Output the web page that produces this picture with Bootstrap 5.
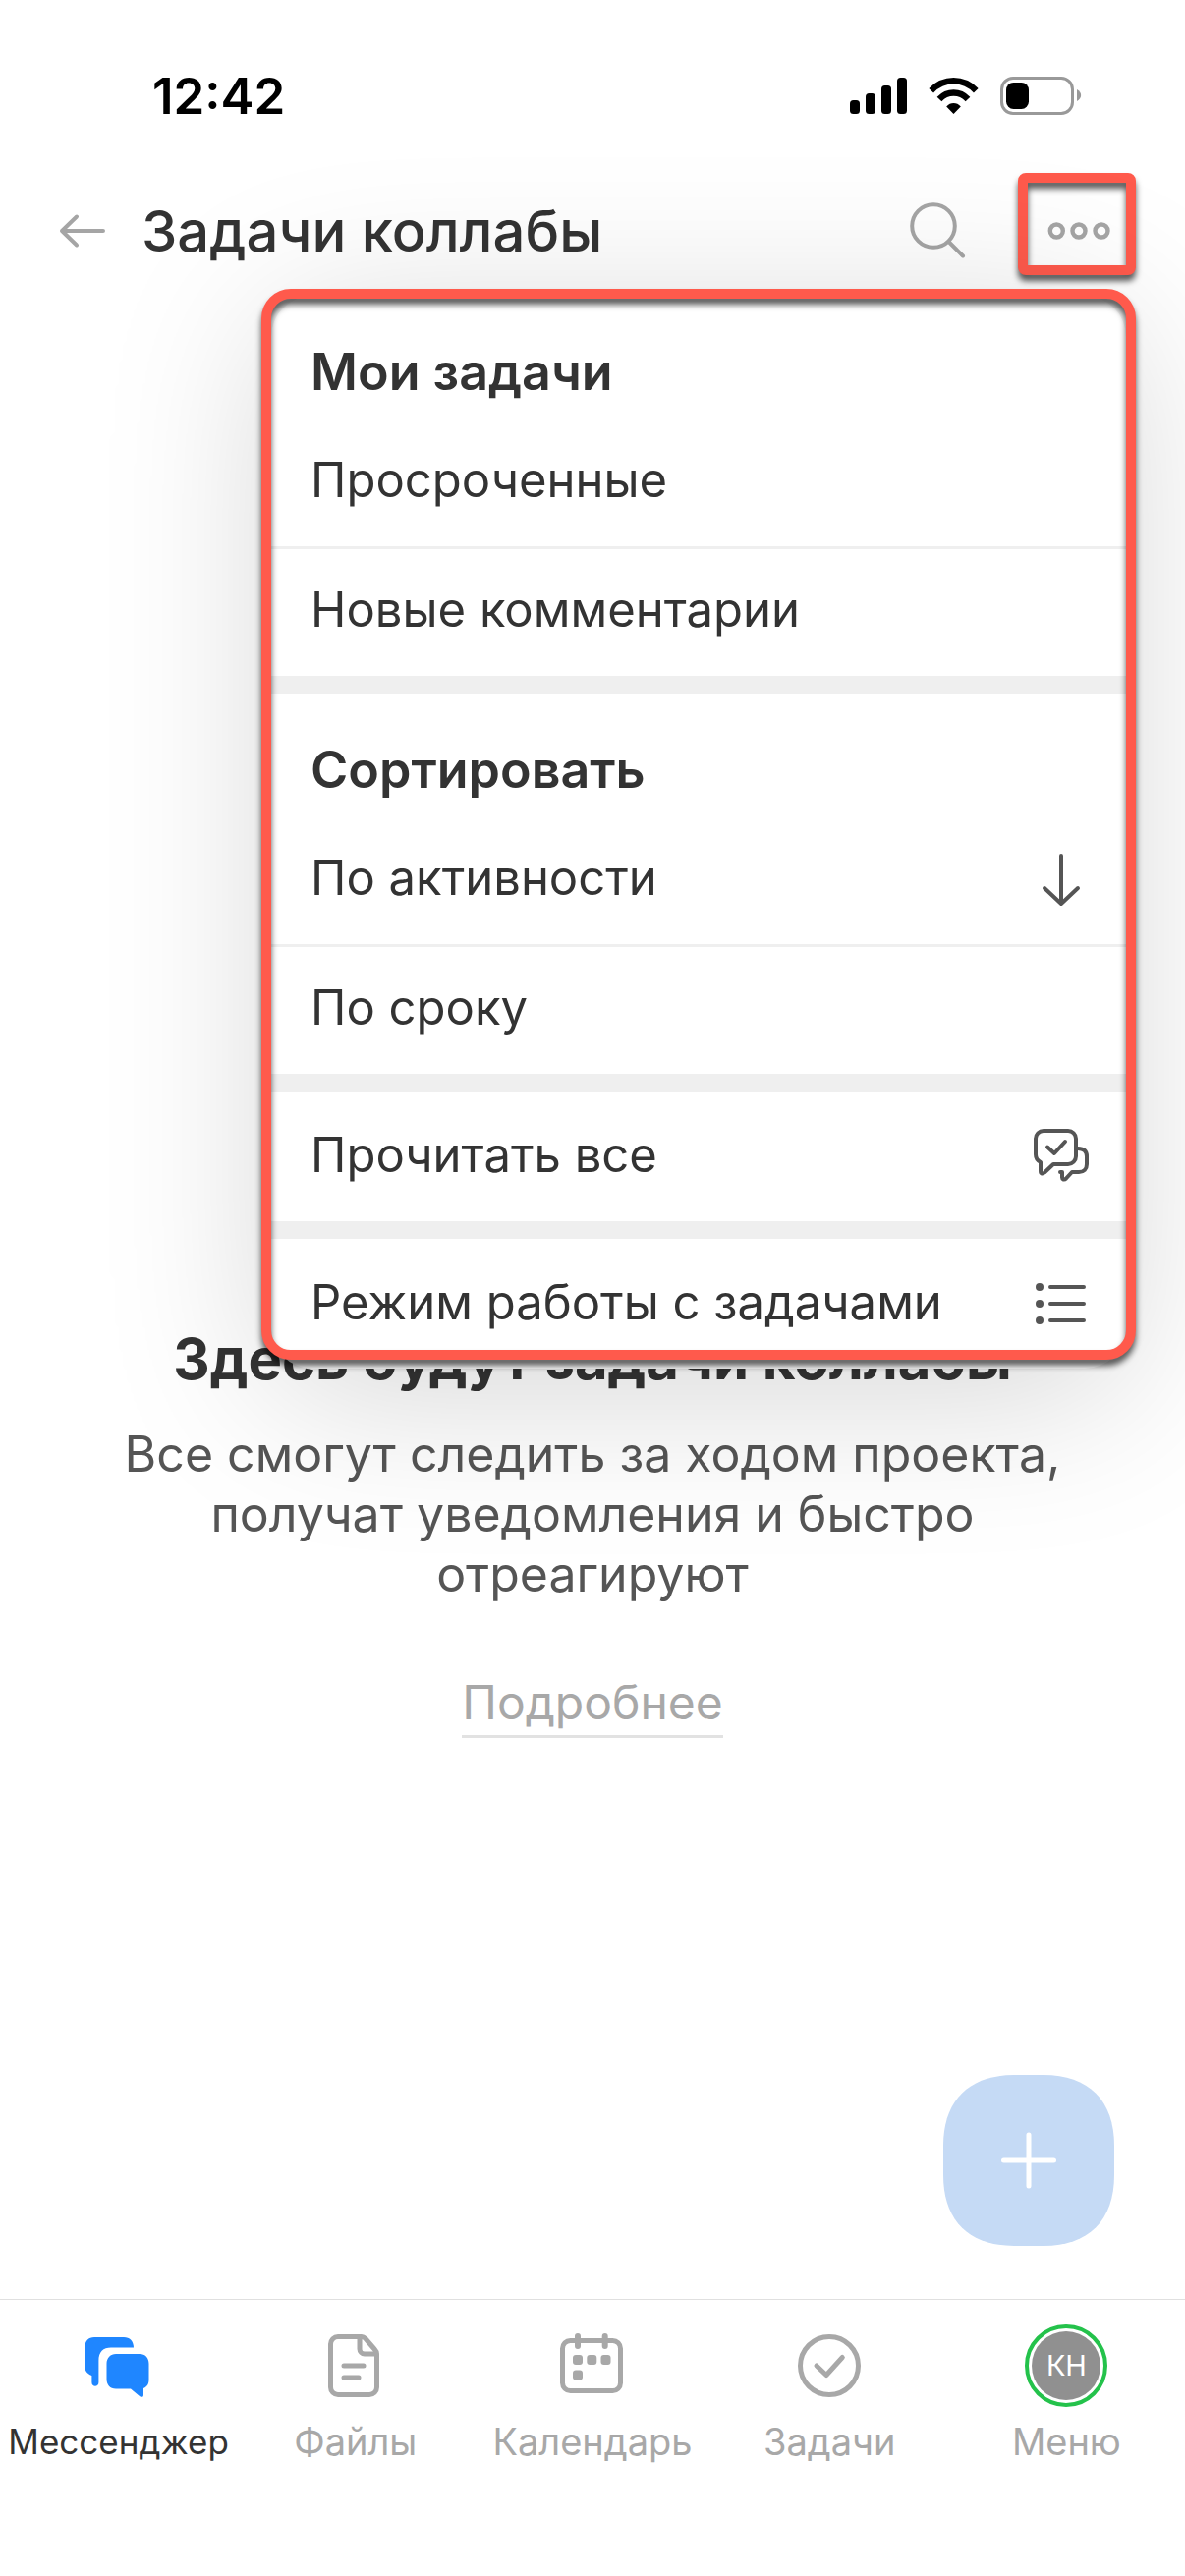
<!DOCTYPE html>
<html lang="ru">
<head>
<meta charset="utf-8">
<meta name="viewport" content="width=device-width, initial-scale=1">
<title>Задачи коллабы</title>
<link href="https://cdn.jsdelivr.net/npm/bootstrap@5.3.0/dist/css/bootstrap.min.css" rel="stylesheet">
<style>
  body { font-family: Inter, "Liberation Sans", sans-serif; color: #333; background: #fff; }
  svg { display: block; fill: none; stroke-linecap: round; stroke-linejoin: round; }
  .status-bar { padding: 78px 105px 53px 155px; }
  .clock { font-size: 51px; line-height: 39px; font-weight: 600; color: #000; }
  .top-bar { height: 130px; padding: 0 50px 0 54px; color: #a5a5a5; }
  .top-bar .btn, .fab { border: 0; padding: 0; color: inherit; }
  .page-title { font-size: 58px; line-height: 64px; font-weight: 500; color: #333; margin: 0 0 0 30px; }
  .more-btn { width: 120px; height: 104px; margin: 6px 0 20px 42px; }
  .callout::after { content: ""; position: absolute; inset: 0; border: 10px solid #ff5a4c; border-radius: 8px; filter: drop-shadow(0 6px 3px rgba(0,0,0,.65)); pointer-events: none; }
  .popup { top: 131px; right: 60px; width: 870px; z-index: 5; border-radius: 42px; background: #fff; box-shadow: 0 24px 170px rgba(0,0,0,.17); color: #333; }
  .popup.callout::after { inset: -7px -10px 9px; border-radius: 30px; }
  .popup-title { font-size: 52px; line-height: 64px; font-weight: 600; height: 123px; padding: 46px 40px 0; margin: 0; }
  .popup-row { display: flex; align-items: center; justify-content: space-between; width: 100%; height: 132px; padding: 32px 36px 38px 40px; border: 0; border-top: 3px solid transparent; background: none; color: inherit; text-align: left; font-size: 49px; line-height: 60px; }
  .popup-row.split { border-top-color: #efefef; }
  .popup-row svg { stroke: #555; stroke-width: 4; }
  .popup-gap { height: 18px; background: #efefef; }
  .empty { padding: 1048px 100px 0; }
  .empty h2 { font-size: 58px; line-height: 70px; font-weight: 700; margin: 0 0 32px; }
  .empty p { font-size: 50px; line-height: 61px; color: #555; margin: 0 0 71px; }
  .empty a { font-size: 48px; line-height: 58px; color: #a8a8a8; border-bottom: 3px solid #e2e2e2; padding-bottom: 4px; text-decoration: none; }
  .fab { right: 72px; bottom: 54px; width: 174px; height: 174px; }
  .tab-bar { border-top: 1px solid #e0e0e0; padding: 25px 0 114px; }
  .tab-bar a { color: #a8a8a8; font-size: 38px; line-height: 46px; text-decoration: none; gap: 12px; flex: 1 1 0; min-width: 0; }
  .tab-bar a.active { color: #333; font-size: 35px; }
  .tab-icon { height: 84px; }
  .tab-icon svg { stroke: #a8a8a8; stroke-width: 5; }
  .avatar { width: 84px; height: 84px; border: 4px solid #24c24b; padding: 3px; }
  .avatar span { background: #909090; color: #fff; font-size: 29px; line-height: 70px; }
</style>
</head>
<body class="d-flex flex-column min-vh-100 overflow-x-hidden">
  <div class="status-bar d-flex justify-content-between align-items-center">
    <span class="clock">12:42</span>
    <svg width="236" height="39" viewBox="865 78 236 39" aria-hidden="true">
      <g fill="#000"><rect x="865" y="102" width="10" height="14" rx="3.5"/><rect x="881" y="95" width="10" height="21" rx="3.5"/><rect x="897" y="87" width="10" height="29" rx="3.5"/><rect x="913" y="79" width="10" height="37" rx="3.5"/>
      <path d="M963.200 108.500c4-4.600 10.600-4.600 14.600 0l-7.300 7.500z"/></g>
      <g stroke="#000" stroke-width="6.500" stroke-linecap="butt"><path d="M947.700 92.200c12.800-13.200 32.800-13.200 45.600 0"/><path d="M956 101c8.200-8.600 20.800-8.600 29 0"/></g>
      <rect x="1019.500" y="79.500" width="72" height="36" rx="11.500" stroke="#999" stroke-width="3"/>
      <rect x="1024" y="84" width="23" height="27" rx="7.500" fill="#000"/>
      <path d="M1096 91c5.500 3 5.500 9 0 12z" fill="#999"/>
    </svg>
  </div>

  <header class="top-bar position-relative d-flex align-items-center">
    <button class="btn" type="button" aria-label="Назад">
      <svg width="60" height="60" viewBox="0 0 60 60" stroke="#a5a5a5" stroke-width="4"><path d="M51 30H9M24 15.500L9 30l15 14.500"/></svg>
    </button>
    <h1 class="page-title">Задачи коллабы</h1>
    <button class="btn ms-auto" type="button" aria-label="Поиск">
      <svg width="70" height="70" viewBox="0 0 70 70" stroke="#a5a5a5" stroke-width="4"><circle cx="26" cy="30" r="21.800"/><path d="M41.500 46L56 60.500"/></svg>
    </button>
    <button class="btn more-btn callout position-relative" type="button" aria-label="Ещё" aria-expanded="true">
      <svg width="120" height="104" viewBox="0 0 120 104" stroke="#a5a5a5" stroke-width="4.400"><circle cx="39.300" cy="59" r="6.500"/><circle cx="62" cy="59" r="6.500"/><circle cx="85" cy="59" r="6.500"/></svg>
    </button>

    <div class="popup callout position-absolute">
      <h2 class="popup-title">Мои задачи</h2>
      <button class="popup-row" type="button"><span>Просроченные</span></button>
      <button class="popup-row split" type="button"><span>Новые комментарии</span></button>
      <div class="popup-gap"></div>
      <h2 class="popup-title">Сортировать</h2>
      <button class="popup-row" type="button"><span>По активности</span>
        <svg width="60" height="60" viewBox="0 0 60 60"><path d="M30 7v49M13 40L30 56l17-16"/></svg>
      </button>
      <button class="popup-row split" type="button"><span>По сроку</span></button>
      <div class="popup-gap"></div>
      <button class="popup-row" type="button"><span>Прочитать все</span>
        <svg width="60" height="60" viewBox="0 0 60 60"><path d="M22 39H37a8 8 0 0 0 8-8V13a8 8 0 0 0-8-8H12a8 8 0 0 0-8 8V29c0 4 1 6 5 8v9c0 3 2 3 4 1.500zM16 21.500l7 6.500 11-12M47 23c6 0 9 3 9 8v8c0 5-3 8-8 8h-7l-6 6.500c-2 2-4 1-4-1V47h-2"/></svg>
      </button>
      <div class="popup-gap"></div>
      <button class="popup-row" type="button"><span class="text-nowrap">Режим работы с задачами</span>
        <svg width="60" height="60" viewBox="0 0 60 60"><path d="M19 14h34M19 31h34M19 48h34"/><g fill="#555" stroke="none"><circle cx="8" cy="14" r="4"/><circle cx="8" cy="31" r="4"/><circle cx="8" cy="48" r="4"/></g></svg>
      </button>
    </div>
  </header>

  <main class="position-relative flex-grow-1">
    <section class="empty text-center">
      <h2>Здесь будут задачи коллабы</h2>
      <p>Все смогут следить за ходом проекта, получат уведомления и быстро отреагируют</p>
      <a href="#" class="d-inline-block">Подробнее</a>
    </section>
    <button class="btn fab position-absolute" type="button" aria-label="Создать задачу">
      <svg width="174" height="174" viewBox="0 0 174 174"><path d="M72 0H102C148 0 174 26 174 72V102C174 148 148 174 102 174H72C26 174 0 148 0 102V72C0 26 26 0 72 0Z" fill="#c5daf5"/><path d="M87 61v52M61.500 87h51" stroke="#fff" stroke-width="5"/></svg>
    </button>
  </main>

  <nav class="tab-bar d-flex">
    <a href="#" class="active d-flex flex-column align-items-center">
      <span class="tab-icon d-flex align-items-center"><svg width="72" height="72" viewBox="0 0 72 72"><g fill="#1f86ff" stroke="none"><path d="M51 17.600c0-6.600-4-10.600-10-10.600H11C5 7 1.400 11 1.400 17v20c0 4 2 7 7 9v7c0 5 7 5 7 0V31c0-9 4.600-13.400 12.600-13.400z"/><path d="M33 24h24c6 0 9.500 4 9.500 10v16c0 4-1 7-5.500 9v7c0 2-2 2.500-4 1l-9-7.500H33c-6 0-9.500-4-9.500-10V34c0-6 4-10 9.500-10z"/></g></svg></span>
      <span>Мессенджер</span>
    </a>
    <a href="#" class="d-flex flex-column align-items-center">
      <span class="tab-icon d-flex align-items-center"><svg width="72" height="72" viewBox="0 0 72 72"><path d="M42 6.500H18a7.500 7.500 0 0 0-7.500 7.500v44a7.500 7.500 0 0 0 7.500 7.500h32a7.500 7.500 0 0 0 7.500-7.500V24c0-2-1-3.500-2-4.500L46 8.500c-1-1-2.500-2-4-2zM40 8v11a5 5 0 0 0 5 5h12M24 36h20M24 48h15"/></svg></span>
      <span>Файлы</span>
    </a>
    <a href="#" class="d-flex flex-column align-items-center">
      <span class="tab-icon d-flex align-items-center"><svg width="72" height="72" viewBox="0 0 72 72"><rect x="5.500" y="10.500" width="59" height="51" rx="8"/><path d="M21 6v10M48.700 6v10" stroke-width="6"/><g fill="#a8a8a8" stroke="none"><rect x="16" y="25" width="10" height="10" rx="3"/><rect x="30.300" y="25" width="10" height="10" rx="3"/><rect x="44.500" y="25" width="10" height="10" rx="3"/><rect x="16" y="40.500" width="10" height="10" rx="3"/></g></svg></span>
      <span>Календарь</span>
    </a>
    <a href="#" class="d-flex flex-column align-items-center">
      <span class="tab-icon d-flex align-items-center"><svg width="72" height="72" viewBox="0 0 72 72"><circle cx="36" cy="36" r="29.500"/><path d="M23 36l10 9.500L49.300 27.500"/></svg></span>
      <span>Задачи</span>
    </a>
    <a href="#" class="d-flex flex-column align-items-center">
      <span class="avatar d-block rounded-circle"><span class="d-block rounded-circle text-center">КН</span></span>
      <span>Меню</span>
    </a>
  </nav>
<script src="https://cdn.jsdelivr.net/npm/bootstrap@5.3.0/dist/js/bootstrap.bundle.min.js"></script>
</body>
</html>
